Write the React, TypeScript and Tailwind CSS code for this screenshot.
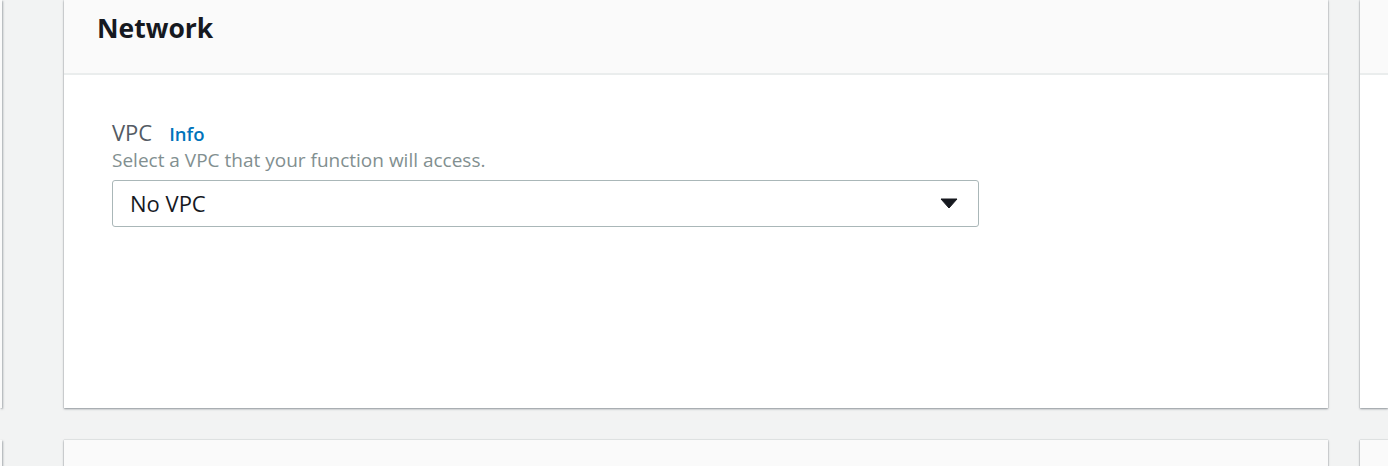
export default function App() {
  return (
    <div
      className="flex h-[466px] w-[1388px] overflow-hidden bg-[#f2f3f3]"
      style={{ fontFamily: '"Open Sans", "Liberation Sans", sans-serif' }}
    >
      {/* left column sliver */}
      <div className="flex w-[2px] shrink-0 flex-col gap-[32px]">
        <div className="h-[408px] shrink-0 bg-[#fafafa] shadow-[1px_1px_2px_rgba(84,91,100,0.5)]" />
        <div className="h-[60px] shrink-0 bg-[#fafafa] shadow-[1px_1px_2px_rgba(84,91,100,0.5)]" />
      </div>

      {/* main column */}
      <div className="ml-[62px] flex w-[1264px] shrink-0 flex-col gap-[32px]">
        <div className="flex h-[408px] shrink-0 flex-col bg-white shadow-[0_1px_2px_rgba(84,91,100,0.6),0_0_1px_rgba(0,28,36,0.3)]">
          <div className="h-[75px] border-b-2 border-[#eaeded] bg-[#fafafa] px-[33px] pt-[8px]">
            <h2 className="text-[26.5px] font-bold leading-[40px] text-[#16191f]">Network</h2>
          </div>
          <div className="px-[48px] pt-[43px]">
            <div className="flex items-baseline gap-[17px]">
              <span className="text-[22px] leading-[28px] text-[#545b64]">VPC</span>
              <span className="text-[18.5px] font-semibold leading-[28px] text-[#0073bb]">Info</span>
            </div>
            <p className="text-[19px] leading-[24px] text-[#828f90]">
              Select a VPC that your function will access.
            </p>
            <div className="mt-[8px] flex h-[47px] w-[867px] items-center justify-between rounded-[3px] border border-[#aab7b8] bg-white pl-[17px] pr-[20px]">
              <span className="text-[22px] text-[#16191f]">No VPC</span>
              <svg width="18" height="11" viewBox="0 0 18 11">
                <path d="M1 1h16l-8 9z" fill="#16191f" stroke="#16191f" strokeWidth="1" strokeLinejoin="round" />
              </svg>
            </div>
          </div>
        </div>
        <div className="h-[60px] shrink-0 bg-[#fafafa] shadow-[0_1px_2px_rgba(84,91,100,0.6),0_0_1px_rgba(0,28,36,0.3)]" />
      </div>

      {/* right column */}
      <div className="ml-[32px] flex flex-1 flex-col gap-[32px]">
        <div className="flex h-[408px] shrink-0 flex-col bg-white shadow-[0_1px_2px_rgba(84,91,100,0.6),0_0_1px_rgba(0,28,36,0.3)]">
          <div className="h-[75px] border-b-2 border-[#eaeded] bg-[#fafafa]" />
        </div>
        <div className="h-[60px] shrink-0 bg-[#fafafa] shadow-[0_1px_2px_rgba(84,91,100,0.6),0_0_1px_rgba(0,28,36,0.3)]" />
      </div>
    </div>
  );
}
